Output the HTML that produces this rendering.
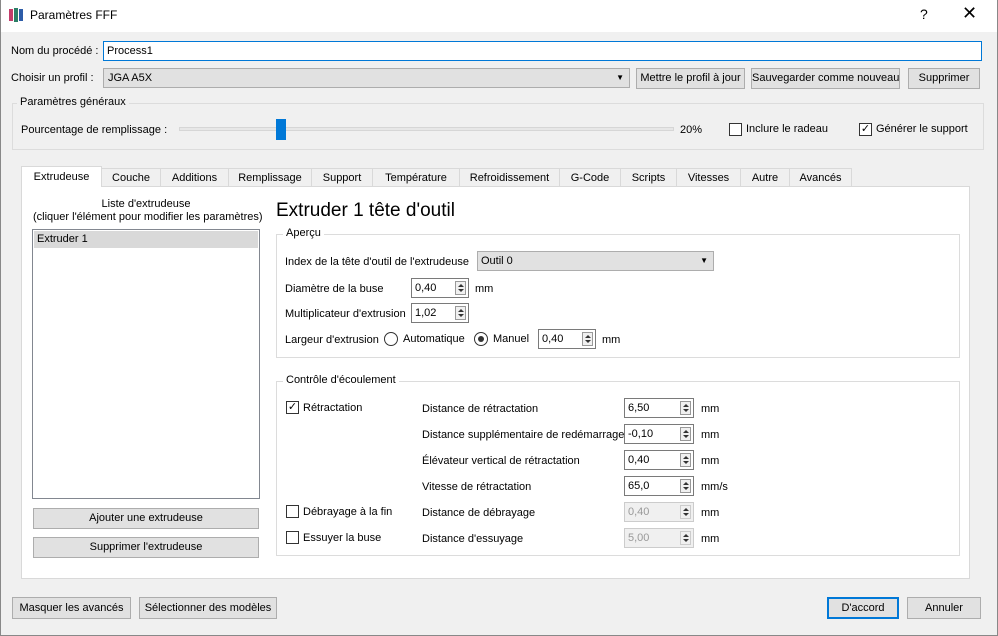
<!DOCTYPE html>
<html><head><meta charset="utf-8"><style>
*{box-sizing:border-box}
body{margin:0;width:998px;height:636px;background:#f0f0f0;font-family:"Liberation Sans",sans-serif;font-size:11px;color:#000;position:relative;overflow:hidden}
.a{position:absolute;white-space:nowrap}
.box{position:absolute;border:1px solid #adadad;background:#e1e1e1;white-space:nowrap}
.btn{position:absolute;border:1px solid #adadad;background:#e1e1e1;text-align:center;line-height:19px;font-size:11px;white-space:nowrap}
.inp{position:absolute;background:#fff;border:1px solid #7a7a7a;padding-left:3px;line-height:18px;white-space:nowrap}
.dis{background:#f0f0f0;border-color:#ccc;color:#999}
.sp{position:absolute;right:2px;top:2px;width:11px;height:14px;border:1px solid #999;background:#f0f0f0}
.sp:before{content:"";position:absolute;left:2px;top:2px;border:3px solid transparent;border-bottom:3px solid #333;border-top:0}
.sp:after{content:"";position:absolute;left:2px;top:7px;border:3px solid transparent;border-top:3px solid #333;border-bottom:0}
.tab{position:absolute;top:168px;height:19px;border:1px solid #d9d9d9;background:#f0f0f0;text-align:center;line-height:18px;white-space:nowrap}
.cb{position:absolute;width:13px;height:13px;border:1px solid #333;background:#fff}
.gb{position:absolute;border:1px solid #dcdcdc}
.gt{position:absolute;background:inherit;padding:0 3px;top:-8px;left:6px;white-space:nowrap}
</style></head><body>
<div class="a" style="left:0;top:0;width:998px;height:32px;background:#fff"></div>
<div class="a" style="left:0;top:0;width:1px;height:636px;background:#888"></div>
<div class="a" style="left:997px;top:0;width:1px;height:636px;background:#888"></div>
<div class="a" style="left:0;top:635px;width:998px;height:1px;background:#888"></div>
<svg class="a" style="left:9px;top:7px" width="14" height="16"><rect x="0" y="2" width="4" height="12" fill="#c33d6b"/><rect x="5" y="1" width="4" height="14" fill="#2c7f66"/><rect x="10" y="2" width="4" height="12" fill="#2d5ca8"/></svg>
<div class="a" style="left:30px;top:8px;font-size:12px">Paramètres FFF</div>
<div class="a" style="left:920px;top:6px;font-size:14px">?</div>
<div class="a" style="left:962px;top:3px;font-size:18px">✕</div>

<div class="a" style="left:11px;top:45px">Nom du procédé :</div>
<div class="inp" style="left:103px;top:41px;width:879px;height:20px;border-color:#0078d7">Process1</div>
<div class="a" style="left:11px;top:72px">Choisir un profil :</div>
<div class="box" style="left:103px;top:68px;width:527px;height:20px;padding-left:4px;line-height:18px">JGA A5X<span style="position:absolute;right:5px;top:0;font-size:8px">▼</span></div>
<div class="btn" style="left:636px;top:68px;width:109px;height:21px">Mettre le profil à jour</div>
<div class="btn" style="left:751px;top:68px;width:149px;height:21px">Sauvegarder comme nouveau</div>
<div class="btn" style="left:908px;top:68px;width:72px;height:21px">Supprimer</div>

<div class="gb" style="left:12px;top:103px;width:972px;height:47px;background:#f0f0f0"><span class="gt" style="left:4px">Paramètres généraux</span></div>
<div class="a" style="left:21px;top:124px">Pourcentage de remplissage :</div>
<div class="a" style="left:179px;top:127px;width:495px;height:4px;background:#e7e7e7;border:1px solid #d6d6d6"></div>
<div class="a" style="left:276px;top:119px;width:10px;height:21px;background:#0078d7"></div>
<div class="a" style="left:680px;top:124px">20%</div>
<div class="cb" style="left:729px;top:123px"></div><div class="a" style="left:746px;top:123px">Inclure le radeau</div>
<div class="cb" style="left:859px;top:123px;font-size:11px;line-height:10px;text-align:center">✓</div><div class="a" style="left:876px;top:123px">Générer le support</div>

<div class="a" style="left:21px;top:186px;width:949px;height:393px;background:#fff;border:1px solid #d9d9d9"></div>
<div class="tab" style="left:101px;width:60px">Couche</div>
<div class="tab" style="left:160px;width:69px">Additions</div>
<div class="tab" style="left:228px;width:84px">Remplissage</div>
<div class="tab" style="left:311px;width:62px">Support</div>
<div class="tab" style="left:372px;width:88px">Température</div>
<div class="tab" style="left:459px;width:101px">Refroidissement</div>
<div class="tab" style="left:559px;width:62px">G-Code</div>
<div class="tab" style="left:620px;width:57px">Scripts</div>
<div class="tab" style="left:676px;width:65px">Vitesses</div>
<div class="tab" style="left:740px;width:50px">Autre</div>
<div class="tab" style="left:789px;width:63px">Avancés</div>
<div class="tab" style="left:21px;top:166px;width:81px;height:21px;background:#fff;border-bottom:none;line-height:21px">Extrudeuse</div>

<div class="a" style="left:33px;top:198px;width:226px;text-align:center;line-height:13px">Liste d'extrudeuse<br>(cliquer l'élément pour modifier les paramètres)</div>
<div class="a" style="left:32px;top:229px;width:228px;height:270px;border:1px solid #828790;background:#fff"></div>
<div class="a" style="left:34px;top:231px;width:224px;height:17px;background:#d9d9d9;padding-left:3px;line-height:17px">Extruder 1</div>
<div class="btn" style="left:33px;top:508px;width:226px;height:21px">Ajouter une extrudeuse</div>
<div class="btn" style="left:33px;top:537px;width:226px;height:21px">Supprimer l'extrudeuse</div>

<div class="a" style="left:276px;top:200px;font-size:19px">Extruder 1 tête d'outil</div>
<div class="gb" style="left:276px;top:234px;width:684px;height:124px;background:#fff"><span class="gt">Aperçu</span></div>
<div class="a" style="left:285px;top:256px">Index de la tête d'outil de l'extrudeuse</div>
<div class="box" style="left:477px;top:251px;width:237px;height:20px;padding-left:3px;line-height:18px">Outil 0<span style="position:absolute;right:5px;top:0;font-size:8px">▼</span></div>
<div class="a" style="left:285px;top:283px">Diamètre de la buse</div>
<div class="inp" style="left:411px;top:278px;width:58px;height:20px">0,40<div class="sp"></div></div><div class="a" style="left:475px;top:283px">mm</div>
<div class="a" style="left:285px;top:308px">Multiplicateur d'extrusion</div>
<div class="inp" style="left:411px;top:303px;width:58px;height:20px">1,02<div class="sp"></div></div>
<div class="a" style="left:285px;top:334px">Largeur d'extrusion</div>
<div class="a" style="left:384px;top:332px;width:14px;height:14px;border:1px solid #333;border-radius:50%;background:#fff"></div>
<div class="a" style="left:403px;top:333px">Automatique</div>
<div class="a" style="left:474px;top:332px;width:14px;height:14px;border:1px solid #333;border-radius:50%;background:#fff"><div style="position:absolute;left:3px;top:3px;width:6px;height:6px;border-radius:50%;background:#333"></div></div>
<div class="a" style="left:493px;top:333px">Manuel</div>
<div class="inp" style="left:538px;top:329px;width:58px;height:20px">0,40<div class="sp"></div></div><div class="a" style="left:602px;top:334px">mm</div>

<div class="gb" style="left:276px;top:381px;width:684px;height:175px;background:#fff"><span class="gt">Contrôle d'écoulement</span></div>
<div class="cb" style="left:286px;top:401px;font-size:11px;line-height:10px;text-align:center">✓</div><div class="a" style="left:303px;top:402px">Rétractation</div>
<div class="cb" style="left:286px;top:505px"></div><div class="a" style="left:303px;top:506px">Débrayage à la fin</div>
<div class="cb" style="left:286px;top:531px"></div><div class="a" style="left:303px;top:532px">Essuyer la buse</div>
<div class="a" style="left:422px;top:403px">Distance de rétractation</div>
<div class="a" style="left:422px;top:429px">Distance supplémentaire de redémarrage</div>
<div class="a" style="left:422px;top:455px">Élévateur vertical de rétractation</div>
<div class="a" style="left:422px;top:481px">Vitesse de rétractation</div>
<div class="a" style="left:422px;top:507px">Distance de débrayage</div>
<div class="a" style="left:422px;top:533px">Distance d'essuyage</div>
<div class="inp" style="left:624px;top:398px;width:70px;height:20px">6,50<div class="sp"></div></div><div class="a" style="left:701px;top:403px">mm</div>
<div class="inp" style="left:624px;top:424px;width:70px;height:20px">-0,10<div class="sp"></div></div><div class="a" style="left:701px;top:429px">mm</div>
<div class="inp" style="left:624px;top:450px;width:70px;height:20px">0,40<div class="sp"></div></div><div class="a" style="left:701px;top:455px">mm</div>
<div class="inp" style="left:624px;top:476px;width:70px;height:20px">65,0<div class="sp"></div></div><div class="a" style="left:701px;top:481px">mm/s</div>
<div class="inp dis" style="left:624px;top:502px;width:70px;height:20px">0,40<div class="sp" style="border-color:#ccc"></div></div><div class="a" style="left:701px;top:507px">mm</div>
<div class="inp dis" style="left:624px;top:528px;width:70px;height:20px">5,00<div class="sp" style="border-color:#ccc"></div></div><div class="a" style="left:701px;top:533px">mm</div>

<div class="btn" style="left:12px;top:597px;width:119px;height:22px;line-height:20px">Masquer les avancés</div>
<div class="btn" style="left:139px;top:597px;width:138px;height:22px;line-height:20px">Sélectionner des modèles</div>
<div class="btn" style="left:827px;top:597px;width:72px;height:22px;border:2px solid #0078d7;line-height:18px">D'accord</div>
<div class="btn" style="left:907px;top:597px;width:74px;height:22px;line-height:20px">Annuler</div>
</body></html>
